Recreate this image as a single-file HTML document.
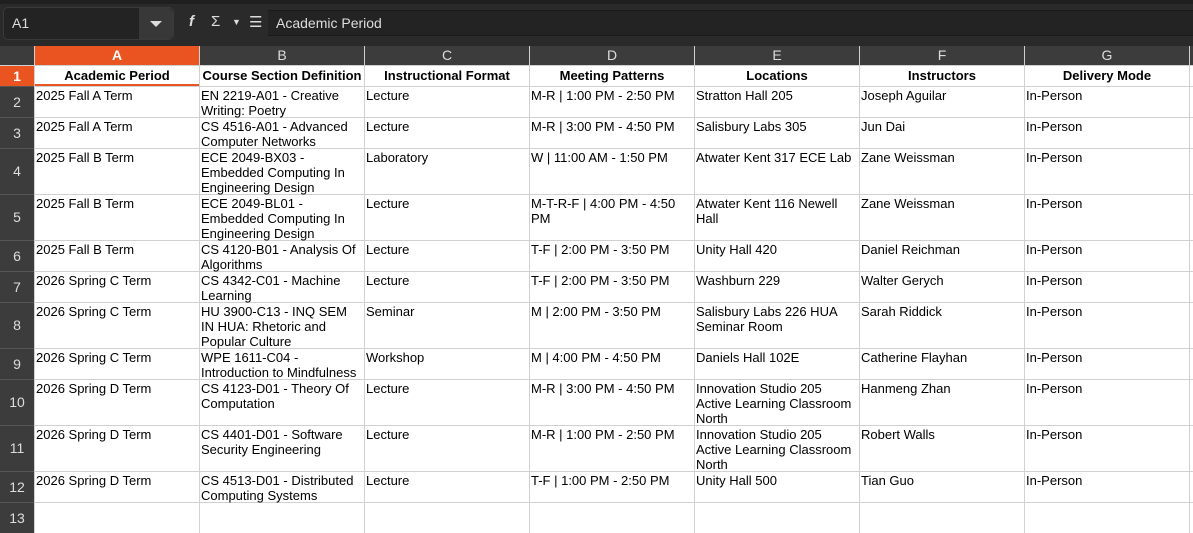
<!DOCTYPE html>
<html><head><meta charset="utf-8"><style>
*{margin:0;padding:0;box-sizing:border-box}
body{width:1193px;height:512px;overflow:hidden;background:#fff;font-family:"Liberation Sans",sans-serif;position:relative}
.top{position:absolute;left:0;top:0;width:1193px;height:46px;background:#2a2a2a}
.top .bar{position:absolute;left:0;top:0;width:1193px;height:4px;background:#1f1f1f}
.nb{position:absolute;left:3px;top:7px;width:171px;height:33px;background:#232323;border:1px solid #3a3a3a;border-radius:5px;color:#ddd;font-size:14px;line-height:31px;padding-left:8px}
.nb .dd{position:absolute;right:0;top:0;width:34px;height:31px;background:#383838;border-radius:0 5px 5px 0}
.nb .dd:after{content:"";position:absolute;left:11px;top:13px;border-left:6px solid transparent;border-right:6px solid transparent;border-top:6px solid #ddd}
.ic{position:absolute;color:#ddd;font-size:15px;top:13px}
.fx{position:absolute;left:268px;top:10px;width:925px;height:26px;background:#232323;border-top:1px solid #1a1a1a;border-bottom:1px solid #1a1a1a;color:#ddd;font-size:14px;line-height:24px;padding-left:8px}
.g{position:absolute;left:0;top:46px;display:grid;grid-template-columns:34px repeat(7,164px) 10px;grid-template-rows:19px 20px 30px 30px 45px 45px 30px 30px 45px 30px 45px 45px 30px 30px;gap:1px;background:#d0d0d0;width:1200px}
.g>div{background:#fff;font-size:13px;line-height:15px;padding:1px 1px 0 1px;overflow:visible;color:#000;white-space:normal}
.g>div.h{background:#3c3c3c;color:#ddd;text-align:center;font-size:14px;line-height:19px;padding:0}
.g>div.rh{background:#3c3c3c;color:#ddd;text-align:center;font-size:14px;padding:0;display:flex;align-items:center;justify-content:center;box-shadow:0 1px 0 #555}
.g>div.sel{background:#e95420;color:#fff;font-weight:bold}
.g>div.b{font-weight:bold;text-align:center;font-family:"Liberation Sans Narrow","Liberation Sans",sans-serif;font-size:13px;line-height:19px;padding:0}
.g>div.a1{border-bottom:2px solid #e95420}
</style></head><body>
<div class="top"><div class="bar"></div>
<div class="nb">A1<div class="dd"></div></div>
<span class="ic" style="left:189px;font-style:italic;font-weight:bold">f</span>
<span class="ic" style="left:211px">Σ</span>
<span class="ic" style="left:232px;font-size:9px;top:17px">▼</span>
<span class="ic" style="left:249px">☰</span>
<div class="fx">Academic Period</div>
</div>
<div class="g">
<div class="h"></div><div class="h sel">A</div><div class="h">B</div><div class="h">C</div><div class="h">D</div><div class="h">E</div><div class="h">F</div><div class="h">G</div><div class="h"></div>
<div class="rh sel">1</div><div class="b a1">Academic Period</div><div class="b">Course Section Definition</div><div class="b">Instructional Format</div><div class="b">Meeting Patterns</div><div class="b">Locations</div><div class="b">Instructors</div><div class="b">Delivery Mode</div><div></div>
<div class="rh">2</div><div>2025 Fall A Term</div><div>EN 2219-A01 - Creative Writing: Poetry</div><div>Lecture</div><div>M-R | 1:00 PM - 2:50 PM</div><div>Stratton Hall 205</div><div>Joseph Aguilar</div><div>In-Person</div><div></div>
<div class="rh">3</div><div>2025 Fall A Term</div><div>CS 4516-A01 - Advanced Computer Networks</div><div>Lecture</div><div>M-R | 3:00 PM - 4:50 PM</div><div>Salisbury Labs 305</div><div>Jun Dai</div><div>In-Person</div><div></div>
<div class="rh">4</div><div>2025 Fall B Term</div><div>ECE 2049-BX03 - Embedded Computing In Engineering Design</div><div>Laboratory</div><div>W | 11:00 AM - 1:50 PM</div><div>Atwater Kent 317 ECE Lab</div><div>Zane Weissman</div><div>In-Person</div><div></div>
<div class="rh">5</div><div>2025 Fall B Term</div><div>ECE 2049-BL01 - Embedded Computing In Engineering Design</div><div>Lecture</div><div>M-T-R-F | 4:00 PM - 4:50 PM</div><div>Atwater Kent 116 Newell Hall</div><div>Zane Weissman</div><div>In-Person</div><div></div>
<div class="rh">6</div><div>2025 Fall B Term</div><div>CS 4120-B01 - Analysis Of Algorithms</div><div>Lecture</div><div>T-F | 2:00 PM - 3:50 PM</div><div>Unity Hall 420</div><div>Daniel Reichman</div><div>In-Person</div><div></div>
<div class="rh">7</div><div>2026 Spring C Term</div><div>CS 4342-C01 - Machine Learning</div><div>Lecture</div><div>T-F | 2:00 PM - 3:50 PM</div><div>Washburn 229</div><div>Walter Gerych</div><div>In-Person</div><div></div>
<div class="rh">8</div><div>2026 Spring C Term</div><div>HU 3900-C13 - INQ SEM IN HUA: Rhetoric and Popular Culture</div><div>Seminar</div><div>M | 2:00 PM - 3:50 PM</div><div>Salisbury Labs 226 HUA Seminar Room</div><div>Sarah Riddick</div><div>In-Person</div><div></div>
<div class="rh">9</div><div>2026 Spring C Term</div><div>WPE 1611-C04 - Introduction to Mindfulness</div><div>Workshop</div><div>M | 4:00 PM - 4:50 PM</div><div>Daniels Hall 102E</div><div>Catherine Flayhan</div><div>In-Person</div><div></div>
<div class="rh">10</div><div>2026 Spring D Term</div><div>CS 4123-D01 - Theory Of Computation</div><div>Lecture</div><div>M-R | 3:00 PM - 4:50 PM</div><div>Innovation Studio 205 Active Learning Classroom North</div><div>Hanmeng Zhan</div><div>In-Person</div><div></div>
<div class="rh">11</div><div>2026 Spring D Term</div><div>CS 4401-D01 - Software Security Engineering</div><div>Lecture</div><div>M-R | 1:00 PM - 2:50 PM</div><div>Innovation Studio 205 Active Learning Classroom North</div><div>Robert Walls</div><div>In-Person</div><div></div>
<div class="rh">12</div><div>2026 Spring D Term</div><div>CS 4513-D01 - Distributed Computing Systems</div><div>Lecture</div><div>T-F | 1:00 PM - 2:50 PM</div><div>Unity Hall 500</div><div>Tian Guo</div><div>In-Person</div><div></div>
<div class="rh">13</div><div></div><div></div><div></div><div></div><div></div><div></div><div></div><div></div>
</div>
</body></html>
